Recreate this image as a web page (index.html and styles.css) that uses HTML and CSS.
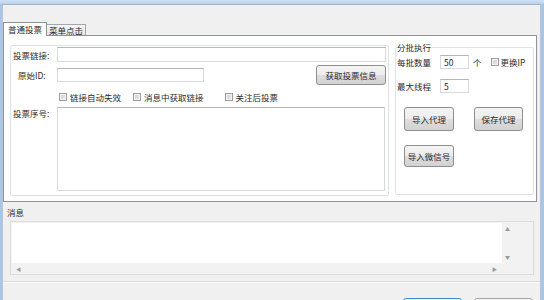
FILE: index.html
```html
<!DOCTYPE html>
<html>
<head>
  <meta charset="utf-8">
  <title>投票助手</title>
  <link rel="stylesheet" href="styles.css">
</head>
<body>
  <div class="frame-top"></div>
  <div class="window">
    <div class="client">
      <div class="tabs">
        <div class="tab active">普通投票</div>
        <div class="tab">菜单点击</div>
      </div>

      <div class="tab-page">
        <div class="vote-group">
          <div class="row row-url">
            <label class="field-label">投票链接:</label>
            <input class="textbox url-box" type="text">
          </div>
          <div class="row row-id">
            <label class="field-label indent">原始ID:</label>
            <input class="textbox id-box" type="text">
            <button class="button fetch-btn">获取投票信息</button>
          </div>
          <div class="row row-checks">
            <label class="check"><span class="checkbox"></span>链接自动失效</label>
            <label class="check"><span class="checkbox"></span>消息中获取链接</label>
            <label class="check follow"><span class="checkbox"></span>关注后投票</label>
          </div>
          <div class="row row-ids">
            <label class="field-label">投票序号:</label>
            <textarea class="textbox ids-box"></textarea>
          </div>
        </div>

        <fieldset class="batch-group">
          <legend>分批执行</legend>
          <div class="batch-row first">
            <span>每批数量</span>
            <input class="textbox num-box" type="text" value="50">
            <span class="unit">个</span>
            <label class="check swap-ip"><span class="checkbox"></span>更换IP</label>
          </div>
          <div class="batch-row">
            <span>最大线程</span>
            <input class="textbox num-box" type="text" value="5">
          </div>
          <div class="batch-buttons">
            <button class="button tall">导入代理</button>
            <button class="button tall save">保存代理</button>
          </div>
          <div class="batch-buttons second">
            <button class="button">导入微信号</button>
          </div>
        </fieldset>
      </div>

      <div class="msg-title">消息</div>
      <div class="msg-box">
        <div class="msg-text"></div>
        <div class="vscroll"><span>▲</span><span>▼</span></div>
        <div class="hscroll"><span>◀</span><span>▶</span></div>
        <div class="corner"></div>
      </div>

      <div class="separator"></div>
      <div class="footer">
        <button class="button primary"></button>
        <button class="button wide"></button>
      </div>
    </div>
  </div>
</body>
</html>
```

FILE: styles.css
```css
* {
  margin: 0;
  padding: 0;
  box-sizing: border-box;
  font-family: "Noto Sans CJK SC", "DejaVu Sans", sans-serif;
}

body {
  width: 544px;
  height: 300px;
  overflow: hidden;
  background: #f0f0f0;
  color: #2b2b2b;
  font-size: 8.5px;
  line-height: 10px;
}

.frame-top {
  height: 4px;
  background: linear-gradient(#cfe1f4, #b9d1ec);
}

.window {
  height: 296px;
  border-left: 2px solid #a9c6e6;
  border-right: 3px solid #a9c6e6;
}

.client {
  height: 100%;
  background: #f0f0f0;
  border-top: 1px solid #a7b3c0;
  border-left: 1px solid #b9c4d0;
  border-right: 1px solid #b9c4d0;
  display: flex;
  flex-direction: column;
}

.client > * {
  flex-shrink: 0;
}

/* tabs */
.tabs {
  display: flex;
  align-items: flex-end;
  height: 14px;
  margin-top: 17px;
}

.tab {
  height: 12px;
  padding: 0 2px;
  border: 1px solid #a3a6ac;
  border-left: 0;
  border-bottom: 0;
  background: linear-gradient(#f6f6f6, #e4e4e4);
  line-height: 11px;
}

.tab.active {
  position: relative;
  z-index: 1;
  height: 14px;
  padding: 0 4px;
  border-left: 1px solid #8f939a;
  border-color: #8f939a;
  background: #fff;
  line-height: 12px;
}

.tab-page {
  height: 167px;
  margin: -1px 3px 0 0;
  padding: 0 2px 0 6px;
  border: 1px solid #8f939a;
  background: #fff;
  display: flex;
  gap: 6px;
}

/* buttons */
.button {
  width: 50px;
  height: 22px;
  padding: 0;
  border: 1px solid #8e8e8e;
  border-radius: 3px;
  background: linear-gradient(#f4f4f4, #ececec 50%, #dedede 50%, #d2d2d2);
  font-size: 8.5px;
  color: #2b2b2b;
  white-space: nowrap;
}

.button.tall {
  height: 24px;
}

.button.save {
  width: 49px;
}

/* left group */
.vote-group {
  width: 379px;
  height: 151px;
  margin-top: 9px;
  padding: 0 2px 0 0;
  border: 1px solid #dfe3e7;
  border-radius: 2px;
  display: flex;
  flex-direction: column;
}

.row {
  display: flex;
  align-items: center;
}

.field-label {
  width: 46px;
  padding-left: 2px;
  flex-shrink: 0;
}

.field-label.indent {
  padding-left: 7px;
}

.textbox {
  border: 1px solid #d6d9de;
  border-top-color: #b3b6bc;
  background: #fff;
  font-size: 8.5px;
  color: #2b2b2b;
  padding: 0 3px;
  outline: none;
}

.row-url {
  margin-top: 1px;
}

.url-box {
  flex: 1;
  height: 15px;
}

.row-id {
  margin-top: 3px;
  height: 20px;
}

.id-box {
  width: 147px;
  height: 14px;
}

.fetch-btn {
  width: 70px;
  height: 20px;
  margin-left: auto;
}

.row-checks {
  margin-top: 6px;
  height: 12px;
  padding-left: 48px;
  gap: 12px;
}

.check {
  display: flex;
  align-items: center;
  gap: 3px;
  white-space: nowrap;
}

.check.follow {
  margin-left: 9px;
}

.checkbox {
  width: 8px;
  height: 8px;
  flex-shrink: 0;
  border: 1px solid #9c9c9c;
  background: linear-gradient(135deg, #cfcfcf, #ececec);
  box-shadow: inset 0 0 0 1px #f4f4f4;
}

.row-ids {
  margin-top: 4px;
  align-items: flex-start;
}

.row-ids .field-label {
  margin-top: 1px;
}

.ids-box {
  width: 328px;
  height: 84px;
  resize: none;
}

/* right group */
.batch-group {
  width: 139px;
  height: 153px;
  min-width: 0;
  margin-top: 6px;
  padding: 0 0 0 1px;
  border: 1px solid #dfe3e7;
  border-radius: 2px;
}

.batch-group legend {
  padding: 0 1px 0 0;
  line-height: 10px;
}

.batch-row {
  display: flex;
  align-items: center;
  height: 14px;
  margin-top: 10px;
  white-space: nowrap;
}

.batch-row.first {
  margin-top: 3px;
}

.num-box {
  width: 29px;
  height: 14px;
  margin-left: 9px;
}

.unit {
  margin-left: 4px;
}

.swap-ip {
  margin-left: 9px;
  gap: 2px;
}

.batch-buttons {
  display: flex;
  gap: 20px;
  margin: 14px 0 0 7px;
}

/* message area */
.msg-title {
  margin: 5px 0 0 4px;
  line-height: 10px;
}

.msg-box {
  width: 524px;
  height: 54px;
  margin: 4px 0 0 7px;
  padding: 1px;
  border: 1px solid #dcdcdc;
  background: #f2f2f2;
  display: grid;
  grid-template-columns: 1fr 30px;
  grid-template-rows: 40px 11px;
}

.msg-text {
  background: #fff;
}

.vscroll {
  display: flex;
  flex-direction: column;
  justify-content: space-between;
  padding: 3px 0 3px 3px;
  font-size: 5px;
  line-height: 6px;
  color: #9a9a9a;
}

.hscroll {
  display: flex;
  justify-content: space-between;
  align-items: center;
  padding: 0 5px 0 4px;
  font-size: 5px;
  color: #9a9a9a;
}

.separator {
  margin: 6px 0 0;
  border-top: 1px solid #dadada;
  border-bottom: 1px solid #fbfbfb;
}

.footer {
  display: flex;
  justify-content: flex-end;
  gap: 12px;
  margin: 15px 7px 0 0;
}

.footer .button {
  width: 59px;
  height: 23px;
  flex-shrink: 0;
}

.button.primary {
  border-color: #3c8fc6;
  background: linear-gradient(#eaf5fc, #d9ecf9);
}

.button.wide {
  border-color: #a5a5a5;
}
```
